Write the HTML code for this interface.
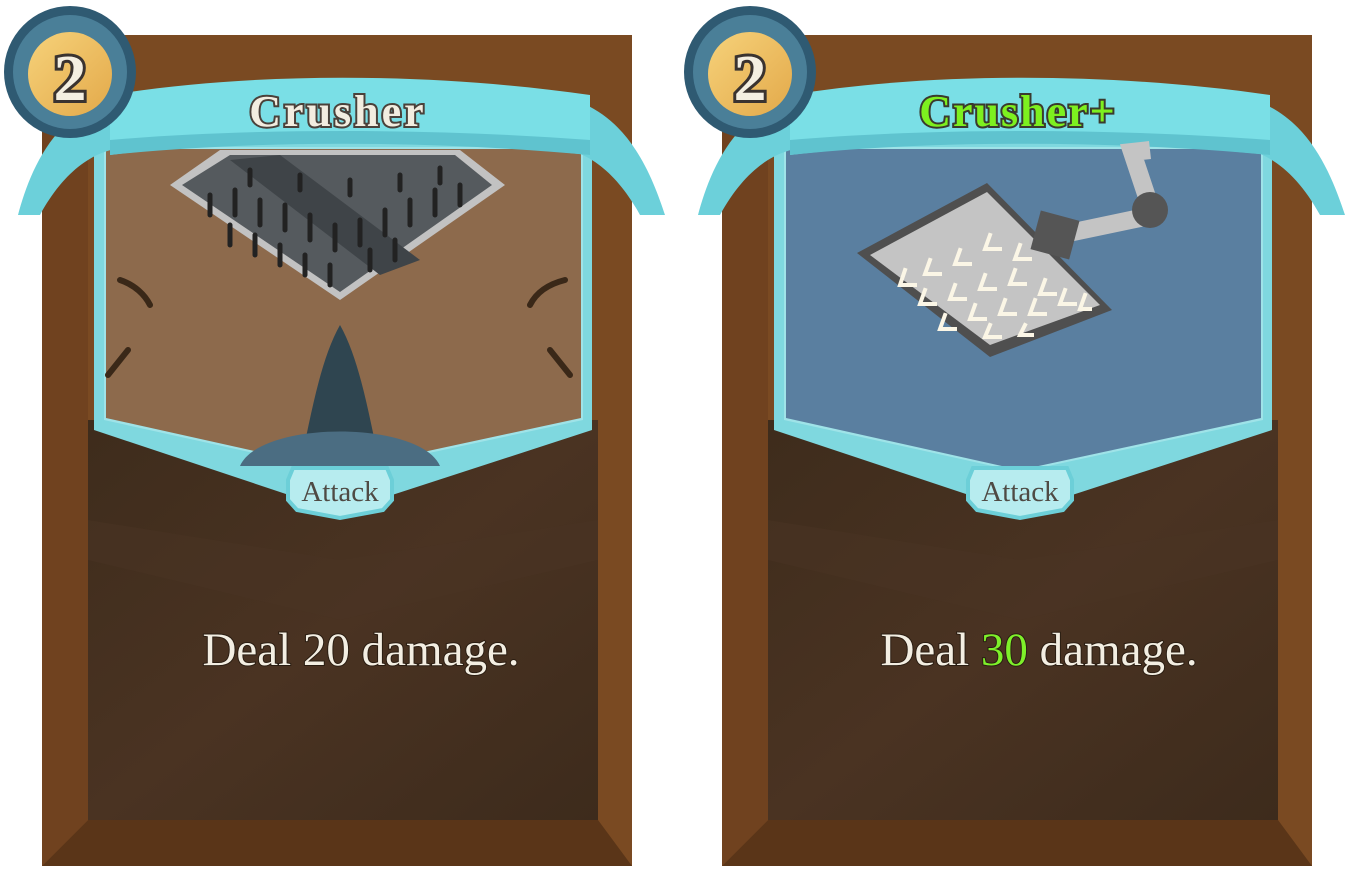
<!DOCTYPE html>
<html><head><meta charset="utf-8"><style>
html,body{margin:0;padding:0;background:#fff;}
svg{display:block}
text{font-family:"Liberation Serif",serif;}
</style></head><body>
<svg width="1356" height="874" viewBox="0 0 1356 874" xmlns="http://www.w3.org/2000/svg">
<defs>
<linearGradient id="orb" x1="0" y1="0" x2="1" y2="1"><stop offset="0" stop-color="#f6d27a"/><stop offset="1" stop-color="#e3a94a"/></linearGradient>
<linearGradient id="dark" x1="0" y1="0" x2="1" y2="1"><stop offset="0" stop-color="#3e2c1c"/><stop offset="0.5" stop-color="#4a3322"/><stop offset="1" stop-color="#3d2b1c"/></linearGradient>
<g id="frame">
  <rect x="42" y="35" width="590" height="831" fill="#7a4a22"/>
  <polygon points="42,866 88,820 598,820 632,866" fill="#5a3518"/>
  <polygon points="42,35 88,60 88,820 42,866" fill="#70421f"/>
  <rect x="88" y="420" width="510" height="400" fill="url(#dark)"/>
  <polygon points="88,520 340,560 598,520 598,560 340,620 88,560" fill="#4a3424" opacity="0.5"/>
</g>
<g id="window">
  <polygon points="94,140 592,140 592,430 340,512 94,430" fill="#7fd8df"/>
  <polygon points="104,147 583,147 583,420 340,472 104,420" fill="#9fe3e8"/>
</g>
<g id="banner">
  <path d="M40,215 C70,160 110,140 150,150 L150,95 C60,90 30,170 18,215 Z" fill="#6cd0da"/>
  <path d="M640,215 C610,160 570,140 530,150 L530,95 C620,90 650,170 665,215 Z" fill="#6cd0da"/>
  <path d="M110,95 C250,72 430,72 590,95 L590,155 C430,138 250,138 110,155 Z" fill="#7adfe6"/>
  <path d="M110,140 C250,128 430,128 590,140 L590,155 C430,140 250,140 110,155 Z" fill="#5fc3cf"/>
</g>
<g id="orbg">
  <circle cx="70" cy="72" r="66" fill="#2f5a72"/>
  <circle cx="70" cy="72" r="57" fill="#4a7f98"/>
  <circle cx="70" cy="74" r="42" fill="url(#orb)"/>
  <text x="70" y="100" text-anchor="middle" font-size="66" font-weight="bold" fill="#f4efe2" stroke="#3a3330" stroke-width="6" paint-order="stroke">2</text>
</g>
<g id="label">
  <path d="M288,480 L293,468 L387,468 L392,480 L392,500 L383,510 L340,518 L297,510 L288,500 Z" fill="#b7ecef" stroke="#6ccfd8" stroke-width="4"/>
  <text x="340" y="501" text-anchor="middle" font-size="29" fill="#4f4a44">Attack</text>
</g>
</defs>

<!-- Card 1 -->
<use href="#frame"/>
<use href="#window"/>
<polygon points="106,149 581,149 581,418 340,470 106,418" fill="#8d6a4c"/>
<polygon points="170,185 220,150 460,150 505,185 340,300" fill="#c2c2c2"/>
<polygon points="182,185 230,155 455,155 492,185 340,292" fill="#555a5e"/>
<polygon points="230,160 280,155 420,260 380,275" fill="#3f4448"/>
<g stroke="#222" stroke-width="5" stroke-linecap="round">
<path d="M210,195v20M235,190v25M260,200v25M285,205v25M310,215v25M335,225v25M230,225v20M255,235v20M280,245v20M305,255v20M330,265v20M360,220v25M385,210v25M410,200v25M435,190v25M460,185v20M250,170v15M300,175v15M350,180v15M400,175v15M440,168v15M370,250v20M395,240v20"/>
</g>
<path d="M340,325 C360,360 370,420 380,466 L300,466 C310,420 320,360 340,325 Z" fill="#2f4550"/>
<path d="M240,466 C260,420 420,420 440,466 Z" fill="#4b6d82"/>
<path d="M120,280 C135,285 145,295 150,305 M530,305 C535,295 545,285 565,280 M128,350 L108,375 M550,350 L570,375" stroke="#3a2818" stroke-width="6" fill="none" stroke-linecap="round"/>
<use href="#banner"/>
<text x="338" y="126" text-anchor="middle" font-size="44" font-weight="bold" fill="#f2ede0" stroke="#4a413a" stroke-width="4" paint-order="stroke" letter-spacing="3">Crusher</text>
<use href="#orbg"/>
<use href="#label"/>
<text x="361" y="665" text-anchor="middle" font-size="47" fill="#f3eee2" stroke="#2a1d12" stroke-width="2" paint-order="stroke">Deal 20 damage.</text>

<!-- Card 2 -->
<g transform="translate(680,0)">
<use href="#frame"/>
<use href="#window"/>
<polygon points="106,149 581,149 581,418 340,470 106,418" fill="#5a7fa0"/>
<use href="#banner"/>
<use href="#orbg"/>
<use href="#label"/>
</g>
<polygon points="857,253 987,183 1112,310 990,357" fill="#4f4f4f"/>
<polygon points="870,255 987,192 1100,305 990,345" fill="#c4c4c4"/>
<g stroke="#fbf6e6" stroke-width="4" fill="none" stroke-linecap="square">
<path d="M905,270l-5,15h15M930,260l-5,14h15M960,250l-5,14h15M990,235l-5,14h15M1020,245l-5,14h15M925,290l-5,14h15M955,285l-5,14h15M985,275l-5,14h15M1015,270l-5,14h15M1045,280l-5,14h15M945,315l-5,14h15M975,305l-5,14h15M1005,300l-5,14h15M1035,300l-5,14h15M1065,290l-5,14h15M1085,295l-5,14h10M990,325l-5,12h15M1025,325l-5,10h12"/>
</g>
<path d="M1045,238 L1140,218 L1148,200 L1132,152 L1150,150" stroke="#c4c4c4" stroke-width="18" fill="none"/>
<circle cx="1150" cy="210" r="18" fill="#555"/>
<rect x="1035" y="215" width="40" height="40" fill="#555" transform="rotate(15 1055 235)"/>
<text x="1018" y="126" text-anchor="middle" font-size="44" font-weight="bold" fill="#7df01f" stroke="#3a3a2e" stroke-width="4" paint-order="stroke" letter-spacing="2">Crusher+</text>
<text x="1039" y="665" text-anchor="middle" font-size="47" fill="#f3eee2" stroke="#2a1d12" stroke-width="2" paint-order="stroke">Deal <tspan fill="#7ef02a">30</tspan> damage.</text>
</svg>
</body></html>
